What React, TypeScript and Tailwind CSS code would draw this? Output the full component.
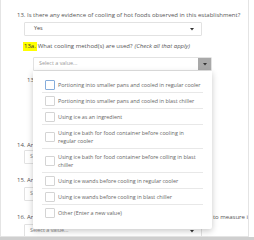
import React from 'react'

const options = [
  { lines: ['Portioning into smaller pans and cooled in regular cooler'], focus: true },
  { lines: ['Portioning into smaller pans and cooled in blast chiller'] },
  { lines: ['Using ice as an ingredient'] },
  { lines: ['Using ice bath for food container before cooling in', 'regular cooler'] },
  { lines: ['Using ice bath for food container before colling in blast', 'chiller'] },
  { lines: ['Using ice wands before cooling in regular cooler'] },
  { lines: ['Using ice wands before cooling in blast chiller'] },
  { lines: ['Other (Enter a new value)'], last: true },
]

function Caret() {
  return (
    <svg width="4" height="3" viewBox="0 0 4 3">
      <path d="M0 0 L4 0 L2 2.5 Z" fill="#333" />
    </svg>
  )
}

function PlainSelect({ text }: { text: string }) {
  return (
    <div className="ml-[7px] w-[178px] h-[14px] border border-[#e2e2e2] rounded-[1px] flex items-center justify-between pl-[5px] pr-[7px]">
      <span className="text-[5.4px] text-[#888] leading-none">{text}</span>
      <Caret />
    </div>
  )
}

function Question({ label, mt }: { label: string; mt: string }) {
  return <div className={`${mt} text-[6px] leading-[8px] whitespace-nowrap`}>{label}</div>
}

export default function App() {
  return (
    <div className="relative w-[254px] h-[240px] bg-white overflow-hidden font-['Open_Sans',sans-serif] text-[#555]">
      <div className="h-[237px] w-[249px] border-l border-r border-b border-[#e4e4e4] pt-[11px] pl-[16px] overflow-hidden">
        <Question label="13. Is there any evidence of cooling of hot foods observed in this establishment?" mt="mt-0" />
        <div className="mt-[3px] ml-[7px] w-[178px] h-[14px] border border-[#e2e2e2] rounded-[1px] flex items-center justify-between pl-[9px] pr-[7px]">
          <span className="text-[5.4px] text-[#444] leading-none">Yes</span>
          <Caret />
        </div>

        <div className="mt-[6px] ml-[6px] flex items-center text-[6px] leading-[9px] whitespace-nowrap">
          <span className="bg-[#ffff00] px-[1px] text-[#333]">13a.</span>
          <span className="ml-[1px]">What cooling method(s) are used?</span>
          <span className="ml-[2px] italic">(Check all that apply)</span>
        </div>

        <div className="mt-[6px] ml-[16px] w-[179px] h-[14px] border border-[#e2e2e2] rounded-[1px] flex items-stretch">
          <div className="flex-1 flex items-center pl-[5px]">
            <span className="text-[5.4px] text-[#999] leading-none">Select a value...</span>
          </div>
          <div className="w-[13px] bg-[#a9a9a9] flex items-center justify-center">
            <Caret />
          </div>
        </div>

        <div className="mt-[5px] ml-[10px] text-[6px] leading-[8px] whitespace-nowrap">13b. How long</div>

        <Question label="14. Are the cooled foods" mt="mt-[57px]" />
        <div className="mt-[1px]">
          <PlainSelect text="Select a value..." />
        </div>

        <Question label="15. Are the foods" mt="mt-[12px]" />
        <div className="mt-[3px]">
          <PlainSelect text="Select a value..." />
        </div>

        <Question label="16. Are there any other tools or thermometers available that are used to measure internal temperatures?" mt="mt-[12px]" />
        <div className="mt-[3px]">
          <PlainSelect text="Select a value..." />
        </div>
      </div>
      <div className="h-[3px] bg-[#cfcfcf]" />

      <div className="absolute left-[33px] top-[71px] w-[179px] h-[158px] bg-white rounded-b-[2px] shadow-[0_2px_6px_rgba(0,0,0,0.22)] px-[9px] pt-[6px]">
        {options.map((o, i) => (
          <div
            key={i}
            className={`flex items-center pt-[4px] pb-[3px] ${o.last ? '' : 'border-b border-[#e8e8e8]'}`}
          >
            <div
              className={`ml-[3px] -my-[1px] w-[10px] h-[10px] shrink-0 rounded-[1px] border ${o.focus ? 'border-[#86addb]' : 'border-[#d4d4d4]'}`}
            />
            <div className="ml-[3px] text-[5.4px] leading-[8px] text-[#666] whitespace-nowrap">
              {o.lines.map((l, j) => (
                <div key={j}>{l}</div>
              ))}
            </div>
          </div>
        ))}
      </div>
    </div>
  )
}
